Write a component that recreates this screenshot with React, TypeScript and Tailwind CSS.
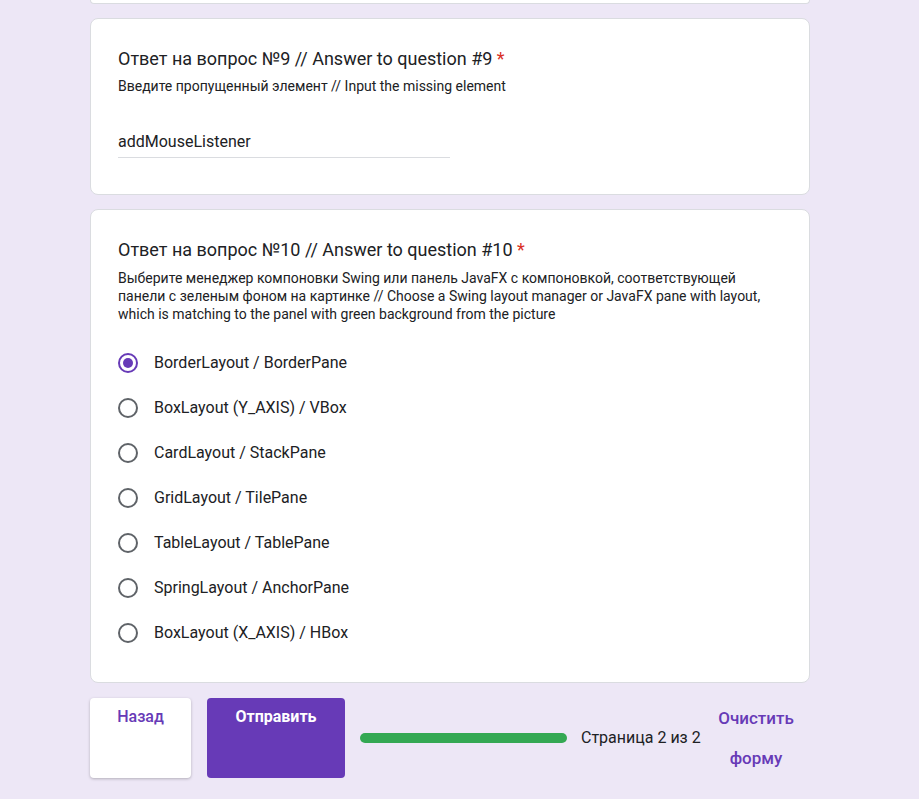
import React, { useState } from 'react';

const options = [
    'BorderLayout / BorderPane',
    'BoxLayout (Y_AXIS) / VBox',
    'CardLayout / StackPane',
    'GridLayout / TilePane',
    'TableLayout / TablePane',
    'SpringLayout / AnchorPane',
    'BoxLayout (X_AXIS) / HBox',
];

const Radio = ({ checked }: { checked: boolean }) => (
    <div className={`w-5 h-5 rounded-full border-2 flex items-center justify-center shrink-0 ${checked ? 'border-[#673ab7]' : 'border-[#5f6368]'}`}>
        {checked && <div className="w-[10px] h-[10px] rounded-full bg-[#673ab7]" />}
    </div>
);

export default function App() {
    const [selected, setSelected] = useState(0);

    return (
        <div className="min-h-[799px] bg-[#ede7f6] font-['Roboto','Liberation_Sans',sans-serif] text-[#202124]">
            <div className="w-[720px] ml-[90px] flex flex-col gap-[14px]">
                {/* previous card, scrolled off */}
                <div className="h-[4px] bg-white border border-t-0 border-[#dadce0] rounded-b-lg" />

                {/* Question 9 */}
                <div className="bg-white border border-[#dadce0] rounded-lg px-[27px] pt-[28px] pb-[36px]">
                    <div className="text-[18px] leading-6">
                        Ответ на вопрос №9 // Answer to question #9 <span className="text-[#d93025]">*</span>
                    </div>
                    <div className="text-[14px] leading-[18px] mt-[6px]">Введите пропущенный элемент // Input the missing element</div>
                    <div className="w-[332px] mt-[35px] border-b border-[#dadce0] pb-[3px]">
                        <div className="text-[16px] leading-6">addMouseListener</div>
                    </div>
                </div>

                {/* Question 10 */}
                <div className="bg-white border border-[#dadce0] rounded-lg px-[27px] pt-[28px] pb-[27px]">
                    <div className="text-[18px] leading-6">
                        Ответ на вопрос №10 // Answer to question #10 <span className="text-[#d93025]">*</span>
                    </div>
                    <div className="text-[14px] leading-[18px] mt-[7px]">
                        Выберите менеджер компоновки Swing или панель JavaFX с компоновкой, соответствующей панели с зеленым фоном на картинке // Choose a Swing layout manager or JavaFX pane with layout, which is matching to the panel with green background from the picture
                    </div>
                    <div className="mt-[17px] flex flex-col">
                        {options.map((opt, i) => (
                            <div key={opt} onClick={() => setSelected(i)} className="h-[45px] flex items-center gap-4 cursor-pointer">
                                <Radio checked={selected === i} />
                                <span className="text-[16px]">{opt}</span>
                            </div>
                        ))}
                    </div>
                </div>

                {/* Footer */}
                <div className="flex items-stretch mt-[1px] h-[80px]">
                    <button className="w-[101px] bg-white rounded shadow-[0_1px_3px_rgba(0,0,0,0.25)] text-[#673ab7] text-[16px] font-medium leading-[38px] flex justify-center items-start">Назад</button>
                    <button className="w-[138px] ml-4 bg-[#673ab7] rounded text-white text-[16px] font-bold leading-[38px] flex justify-center items-start">Отправить</button>
                    <div className="flex items-center ml-[15px]">
                        <div className="w-[207px] h-[10px] rounded-full bg-[#34a853]" />
                        <span className="ml-[14px] text-[16px]">Страница 2 из 2</span>
                    </div>
                    <button className="ml-auto mr-[6px] w-[96px] text-[#673ab7] text-[17px] font-medium leading-[40px] text-center">Очистить форму</button>
                </div>
            </div>
        </div>
    );
}
